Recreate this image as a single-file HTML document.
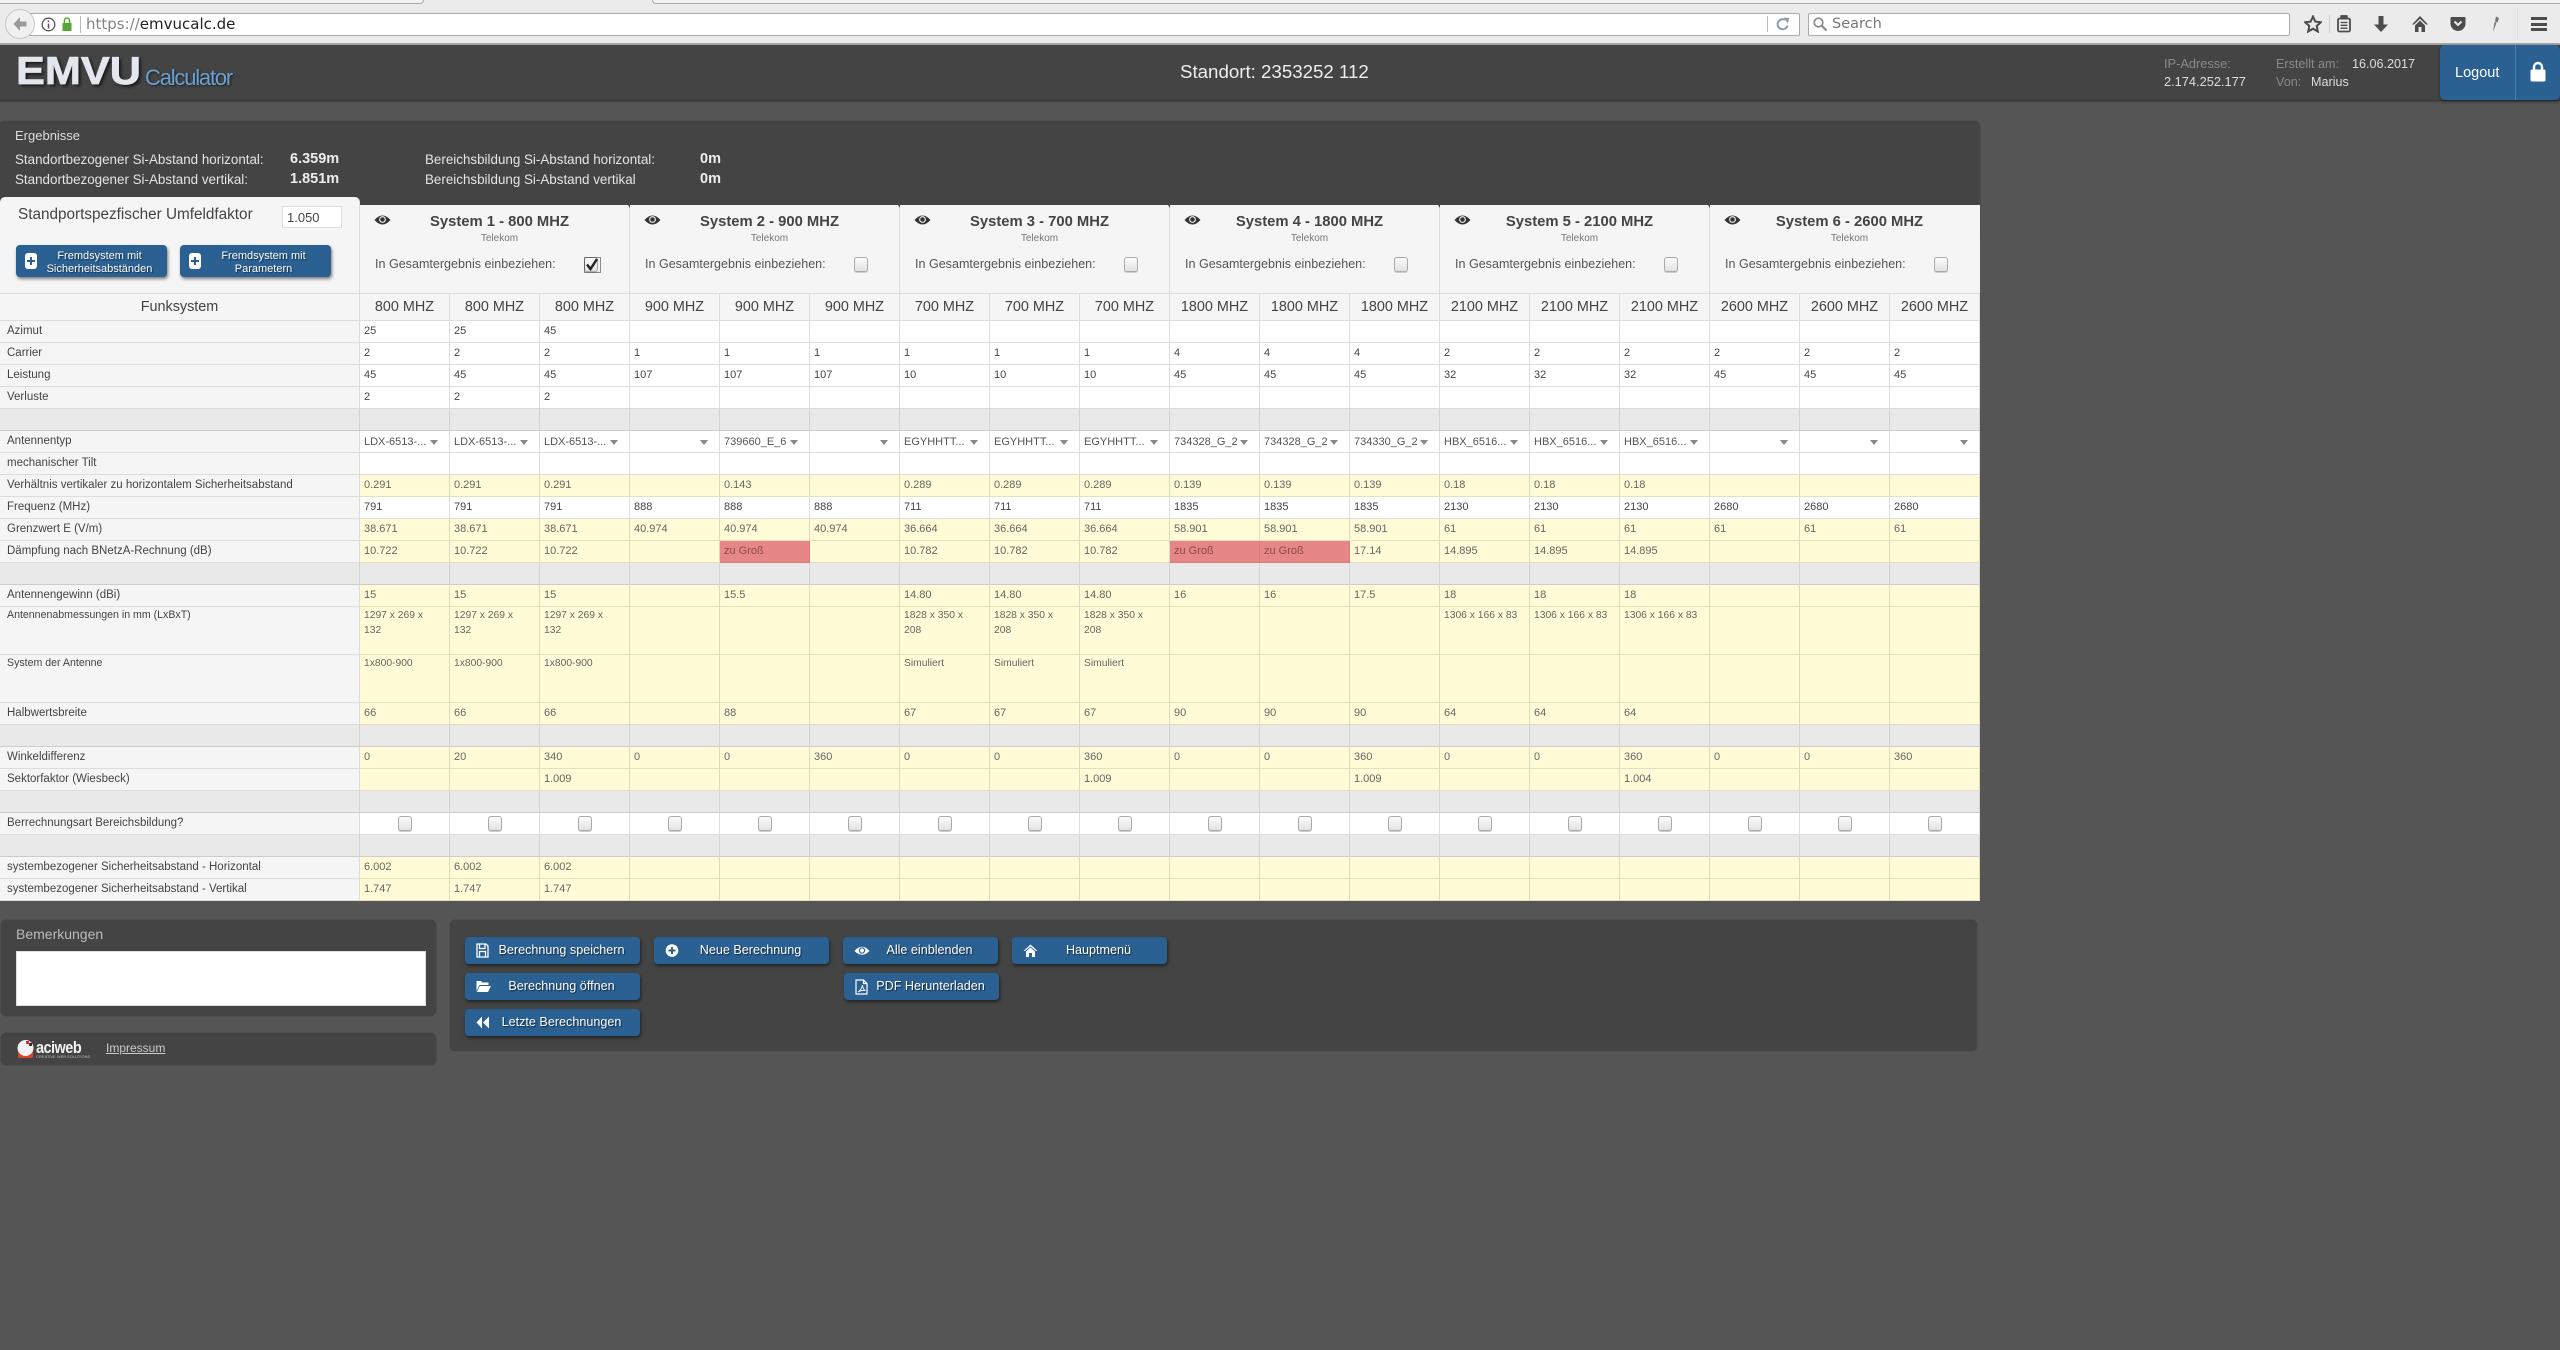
<!DOCTYPE html>
<html lang="de"><head><meta charset="utf-8"><title>EMVU Calculator</title>
<style>
*{box-sizing:border-box}
html,body{margin:0;padding:0;width:2560px;height:1350px;overflow:hidden;background:#555;font-family:"Liberation Sans",Arial,sans-serif;color:#444}
.a{position:absolute}
.t{position:absolute;white-space:nowrap;line-height:1}
#tb{left:0;top:0;width:2560px;height:45px;background:#ebebeb;border-bottom:2px solid #a8a8a8}
.dj{font-family:"DejaVu Sans",sans-serif}
#hd{left:0;top:45px;width:2560px;height:56px;background:#444;border-bottom:1px solid #383838;box-shadow:0 1px 2px rgba(0,0,0,.25)}
.panel{position:absolute;background:#444;border-radius:5px;box-shadow:0 0 1px rgba(0,0,0,.5)}
.btn{position:absolute;height:27px;background:#2a6092;border-radius:4px;box-shadow:1px 2px 3px rgba(0,0,0,.5);color:#fff;font-size:12.6px;line-height:26px;text-align:center;padding-left:18px;text-shadow:1px 1px 1px rgba(0,0,0,.6);white-space:nowrap}
.btn svg{position:absolute;left:11px;top:6px}
.btn2{position:absolute;top:245px;height:32px;width:151px;background:#2a6092;border-radius:4px;box-shadow:1px 2px 3px rgba(0,0,0,.5);color:#fff;font-size:11px;line-height:12.5px;text-align:center;padding:5px 0 0 16px;text-shadow:1px 1px 1px rgba(0,0,0,.5)}
.btn2 i{position:absolute;left:9px;top:8px;width:12px;height:16px;background:#fff;border-radius:3px}
.btn2 i:before{content:"";position:absolute;left:2px;top:7px;width:8px;height:2px;background:#2a6092}
.btn2 i:after{content:"";position:absolute;left:5px;top:4px;width:2px;height:8px;background:#2a6092}
.sys{position:absolute;top:205px;height:88px;width:270px;background:#f5f5f5;border-right:1px solid #ddd}
.sys:after{content:"";position:absolute;right:-3px;top:0;border-left:2.5px solid transparent;border-right:2.5px solid transparent;border-top:3px solid #444}
.sys.l:after{display:none}
.sys .n{position:absolute;left:0;width:279px;top:9px;text-align:center;font-size:14.8px;font-weight:bold;color:#444;line-height:17px;white-space:nowrap}
.sys .k{position:absolute;left:0;width:279px;top:28px;text-align:center;font-size:10px;color:#777;line-height:12px}
.sys .g{position:absolute;left:15px;top:52px;font-size:12.55px;color:#555;line-height:15px;white-space:nowrap}
.sys svg{position:absolute;left:14px;top:9px}
.cb{display:inline-block;width:14px;height:15px;border:1px solid #aaa;border-radius:3px;background:linear-gradient(#fbfbfb,#e2e2e2);box-shadow:0 1px 0 #ccc;vertical-align:middle}
.sys .cb{position:absolute;left:224px;top:52px}
table{position:absolute;left:0;top:293px;width:1980px;border-collapse:separate;border-spacing:0;table-layout:fixed;font-size:11px;color:#444}
td,th{box-sizing:border-box;height:22px;border-right:1px solid #ddd;border-bottom:1px solid #ddd;background:#fff;padding:0 0 0 4px;font-weight:normal;text-align:left;white-space:nowrap;overflow:hidden;line-height:15px}
th{background:#f5f5f5;padding-left:7px;font-size:11.5px;color:#444}
tr.h td,tr.h th{height:27px;background:#f5f5f5;border-top:1px solid #ddd;text-align:center;font-size:14.4px;padding:0;color:#444;line-height:26px}
tr.y td{background:#fffbd6;color:#666;border-color:#e3e0c0;border-right-color:#dedbb9}
tr.e td,tr.e th{background:#e9e9e9;border-bottom-color:#ccc;border-right-color:#d4d4d4}
td.r{background:#e68686!important;color:#8a4b4b!important;border-color:#d77b7b!important}
tr.m td,tr.m th{height:48px;vertical-align:top;padding-top:1px;white-space:normal;font-size:10.3px}
tr.m th{font-size:10.6px;padding-left:7px;padding-right:0;white-space:nowrap}
tr.s td{position:relative;color:#555;padding-top:1px}
tr.s td:after{content:"";position:absolute;left:70px;top:9px;border-left:4px solid transparent;border-right:4px solid transparent;border-top:5px solid #888}
tr.c td{text-align:center;padding:0}
</style></head><body>

<div id="tb" class="a">
 <div class="a" style="left:0;top:0;width:424px;height:4px;border-bottom:1px solid #aaa;border-right:1px solid #aaa;border-bottom-right-radius:6px;background:#f2f2f2"></div>
 <div class="a" style="left:424px;top:3px;width:228px;height:1px;background:#ebebeb"></div>
 <div class="a" style="left:652px;top:0;width:1908px;height:4px;border-bottom:1px solid #aaa;border-left:1px solid #aaa;border-bottom-left-radius:6px;background:#f2f2f2"></div>
 <div class="a" style="left:28px;top:13px;width:1772px;height:23px;background:#fff;border:1px solid #aaa;border-left:0;border-radius:0 2px 2px 0"></div>
 <div class="a" style="left:5px;top:9px;width:30px;height:30px;border-radius:50%;background:#f0f0f0;border:1px solid #c8c8c8"></div>
 <svg class="a" style="left:12px;top:16px" width="16" height="16" viewBox="0 0 16 16"><path d="M8 1 1.500 8 8 15V10.500h6.500V5.500H8z" fill="#9a9a9a"/></svg>
 <svg class="a" style="left:41px;top:17px" width="15" height="15" viewBox="0 0 15 15"><circle cx="7.500" cy="7.500" r="6.300" fill="none" stroke="#555" stroke-width="1.300"/><path d="M7.500 3.500v1.600M7.500 6.500v5" stroke="#555" stroke-width="1.600"/></svg>
 <svg class="a" style="left:61px;top:16px" width="12" height="16" viewBox="0 0 12 16"><path d="M1.500 7V15h9V7z" fill="#57a639"/><path d="M3.500 7V4.500a2.500 2.500 0 0 1 5 0V7" fill="none" stroke="#57a639" stroke-width="1.600"/></svg>
 <div class="a" style="left:80px;top:16px;width:1px;height:17px;background:#bbb"></div>
 <div class="t dj" style="left:86px;top:16px;font-size:15px;line-height:17px;color:#858585">https://<span style="color:#222">emvucalc.de</span></div>
 <div class="a" style="left:1767px;top:16px;width:1px;height:16px;background:#bbb"></div>
 <svg class="a" style="left:1776px;top:17px" width="14" height="14" viewBox="0 0 14 14"><path d="M11.500 8.500A5 5 0 1 1 9 2.800" fill="none" stroke="#8c9bab" stroke-width="2"/><path d="M7.500 0.500 13 1 12 6.500z" fill="#8c9bab"/></svg>
 <div class="a" style="left:1808px;top:13px;width:482px;height:23px;background:#fff;border:1px solid #aaa;border-radius:2px"></div>
 <svg class="a" style="left:1812px;top:16px" width="16" height="16" viewBox="0 0 16 16"><circle cx="6.500" cy="6.500" r="4.300" fill="none" stroke="#888" stroke-width="1.700"/><path d="M10 10 14.500 14.500" stroke="#888" stroke-width="2.200"/></svg>
 <div class="t dj" style="left:1832px;top:16px;font-size:14.500px;line-height:17px;color:#777">Search</div>
 <svg class="a" style="left:2304px;top:15px" width="18" height="18" viewBox="0 0 18 18"><path d="M9 1.500 11.300 6.600 16.800 7.200 12.700 11 13.800 16.500 9 13.700 4.200 16.500 5.300 11 1.200 7.200 6.700 6.600z" fill="none" stroke="#4c4c4c" stroke-width="2"/></svg>
 <div class="a" style="left:2329px;top:15px;width:1px;height:18px;background:#ccc"></div>
 <svg class="a" style="left:2336px;top:15px" width="16" height="18" viewBox="0 0 16 18"><rect x="2" y="3.500" width="12" height="13" rx="1.500" fill="none" stroke="#4c4c4c" stroke-width="1.800"/><path d="M5 0.800h6v3H5zM4.500 7.500h7M4.500 10.300h7M4.500 13.200h7" stroke="#4c4c4c" stroke-width="1.300" fill="#4c4c4c"/></svg>
 <svg class="a" style="left:2373px;top:15px" width="16" height="18" viewBox="0 0 16 18"><path d="M5.500 1h5v8.500H15L8 17 1 9.500h4.500z" fill="#4c4c4c"/></svg>
 <svg class="a" style="left:2411px;top:15px" width="18" height="18" viewBox="0 0 18 18"><path d="M9 1 17 9.500 15 9.500 9 3.800 3 9.500H1z" fill="#4c4c4c"/><path d="M4 10.500 9 5.500 14 10.500V17H10.500V12h-3v5H4z" fill="#4c4c4c"/></svg>
 <svg class="a" style="left:2450px;top:16px" width="16" height="16" viewBox="0 0 16 16"><path d="M1.500 1H14.500Q15.500 1 15.500 2V7.500A7.500 7.500 0 0 1 .5 7.500V2Q.5 1 1.500 1z" fill="#4c4c4c"/><path d="M4.500 5.500 8 9 11.500 5.500" fill="none" stroke="#ebebeb" stroke-width="2"/></svg>
 <svg class="a" style="left:2488px;top:15px" width="14" height="18" viewBox="0 0 14 18"><path d="M8 1.500l3 1.500-1.500 4.500-2.500-1zM6.500 7l2 .8L5 17z" fill="#6b7680"/></svg>
 <div class="a" style="left:2517px;top:8px;width:1px;height:32px;background:#ddd"></div>
 <div class="a" style="left:2531px;top:17px;width:16px;height:3px;background:#4c4c4c"></div>
 <div class="a" style="left:2531px;top:23px;width:16px;height:3px;background:#4c4c4c"></div>
 <div class="a" style="left:2531px;top:28px;width:16px;height:3px;background:#4c4c4c"></div>
</div>

<div id="hd" class="a"></div>
<div class="t" style="left:16px;top:54px;font-size:39px;line-height:36px;font-weight:bold;color:#e2e7ee;-webkit-text-stroke:.7px #e2e7ee;text-shadow:2px 2px 3px rgba(0,0,0,.7);transform:scaleX(1.11);transform-origin:0 0">EMVU</div>
<div class="t" style="left:145px;top:65px;font-size:22px;line-height:25px;color:#6aa0d2;letter-spacing:-1.200px;text-shadow:1px 1px 2px rgba(0,0,0,.6)">Calculator</div>
<div class="t" style="left:1180px;top:62px;font-size:18.700px;line-height:20px;color:#eee">Standort: 2353252 112</div>
<div class="t" style="left:2164px;top:56px;font-size:12.800px;line-height:15px;color:#8a8a8a">IP-Adresse:</div>
<div class="t" style="left:2164px;top:74px;font-size:12.800px;line-height:15px;color:#ddd">2.174.252.177</div>
<div class="t" style="left:2276px;top:57px;font-size:12.600px;line-height:15px;color:#8a8a8a">Erstellt am:</div>
<div class="t" style="left:2352px;top:57px;font-size:12.600px;line-height:15px;color:#ddd">16.06.2017</div>
<div class="t" style="left:2276px;top:75px;font-size:12.600px;line-height:15px;color:#8a8a8a">Von:</div>
<div class="t" style="left:2311px;top:75px;font-size:12.600px;line-height:15px;color:#ddd">Marius</div>
<div class="a" style="left:2440px;top:45px;width:120px;height:55px;background:#2a6092;border-radius:5px;box-shadow:0 1px 3px rgba(0,0,0,.4)"></div>
<div class="a" style="left:2515px;top:45px;width:1px;height:55px;background:#4f80ad"></div>
<div class="t" style="left:2455px;top:65px;font-size:14.500px;line-height:17px;color:#fff">Logout</div>
<svg class="a" style="left:2530px;top:61px" width="16" height="21" viewBox="0 0 16 21"><path d="M4 9V6a4 4 0 0 1 8 0V9" fill="none" stroke="#fff" stroke-width="2.400"/><rect x="0.500" y="8.500" width="15" height="12" rx="1.500" fill="#fff"/></svg>

<div class="panel" style="left:0;top:121px;width:1980px;height:120px"></div>
<div class="t" style="left:15px;top:128px;font-size:13px;line-height:15px;color:#ddd">Ergebnisse</div>
<div class="t" style="left:15px;top:152px;font-size:13.400px;line-height:15px;color:#e4e4e4">Standortbezogener Si-Abstand horizontal:</div>
<div class="t" style="left:15px;top:172px;font-size:13.400px;line-height:15px;color:#e4e4e4">Standortbezogener Si-Abstand vertikal:</div>
<div class="t" style="left:290px;top:151px;font-size:14.500px;line-height:16px;font-weight:bold;color:#eee">6.359m</div>
<div class="t" style="left:290px;top:171px;font-size:14.500px;line-height:16px;font-weight:bold;color:#eee">1.851m</div>
<div class="t" style="left:425px;top:152px;font-size:13.400px;line-height:15px;color:#e4e4e4">Bereichsbildung Si-Abstand horizontal:</div>
<div class="t" style="left:425px;top:172px;font-size:13.400px;line-height:15px;color:#e4e4e4">Bereichsbildung Si-Abstand vertikal</div>
<div class="t" style="left:700px;top:151px;font-size:14.500px;line-height:16px;font-weight:bold;color:#eee">0m</div>
<div class="t" style="left:700px;top:171px;font-size:14.500px;line-height:16px;font-weight:bold;color:#eee">0m</div>

<div class="a" style="left:0;top:197px;width:360px;height:97px;background:#f5f5f5;border-right:1px solid #ddd;border-radius:5px 5px 0 0"></div>
<div class="t" style="left:18px;top:206px;font-size:15.300px;line-height:18px;color:#444">Standportspezfischer Umfeldfaktor</div>
<div class="a" style="left:282px;top:206px;width:60px;height:22px;background:#fff;border:1px solid #ddd;padding-left:4px;font-size:13px;line-height:21px;color:#444">1.050</div>
<div class="btn2" style="left:16px"><i></i>Fremdsystem mit<br>Sicherheitsabständen</div>
<div class="btn2" style="left:180px"><i></i>Fremdsystem mit<br>Parametern</div>

<div class="sys" style="left:360px"><svg width="17" height="12" viewBox="0 0 17 12"><path d="M.5 6Q8.500-3 16.500 6 8.500 15 .5 6z" fill="#333"/><circle cx="8.500" cy="5.500" r="3.400" fill="#f5f5f5"/><circle cx="8.500" cy="5.500" r="2.300" fill="#333"/></svg><div class="n">System 1 - 800 MHZ</div><div class="k">Telekom</div><div class="g">In Gesamtergebnis einbeziehen:</div><span class="cb"></span>
<svg style="left:224px;top:52px" width="17" height="16" viewBox="0 0 17 16"><path d="M3 7.500 6.500 12 13 2" fill="none" stroke="#222" stroke-width="2.400"/><rect x=".5" y=".5" width="16" height="15" fill="none" stroke="#222" stroke-dasharray="1 1"/></svg></div>
<div class="sys" style="left:630px"><svg width="17" height="12" viewBox="0 0 17 12"><path d="M.5 6Q8.500-3 16.500 6 8.500 15 .5 6z" fill="#333"/><circle cx="8.500" cy="5.500" r="3.400" fill="#f5f5f5"/><circle cx="8.500" cy="5.500" r="2.300" fill="#333"/></svg><div class="n">System 2 - 900 MHZ</div><div class="k">Telekom</div><div class="g">In Gesamtergebnis einbeziehen:</div><span class="cb"></span></div>
<div class="sys" style="left:900px"><svg width="17" height="12" viewBox="0 0 17 12"><path d="M.5 6Q8.500-3 16.500 6 8.500 15 .5 6z" fill="#333"/><circle cx="8.500" cy="5.500" r="3.400" fill="#f5f5f5"/><circle cx="8.500" cy="5.500" r="2.300" fill="#333"/></svg><div class="n">System 3 - 700 MHZ</div><div class="k">Telekom</div><div class="g">In Gesamtergebnis einbeziehen:</div><span class="cb"></span></div>
<div class="sys" style="left:1170px"><svg width="17" height="12" viewBox="0 0 17 12"><path d="M.5 6Q8.500-3 16.500 6 8.500 15 .5 6z" fill="#333"/><circle cx="8.500" cy="5.500" r="3.400" fill="#f5f5f5"/><circle cx="8.500" cy="5.500" r="2.300" fill="#333"/></svg><div class="n">System 4 - 1800 MHZ</div><div class="k">Telekom</div><div class="g">In Gesamtergebnis einbeziehen:</div><span class="cb"></span></div>
<div class="sys" style="left:1440px"><svg width="17" height="12" viewBox="0 0 17 12"><path d="M.5 6Q8.500-3 16.500 6 8.500 15 .5 6z" fill="#333"/><circle cx="8.500" cy="5.500" r="3.400" fill="#f5f5f5"/><circle cx="8.500" cy="5.500" r="2.300" fill="#333"/></svg><div class="n">System 5 - 2100 MHZ</div><div class="k">Telekom</div><div class="g">In Gesamtergebnis einbeziehen:</div><span class="cb"></span></div>
<div class="sys l" style="left:1710px;border-right:0"><svg width="17" height="12" viewBox="0 0 17 12"><path d="M.5 6Q8.500-3 16.500 6 8.500 15 .5 6z" fill="#333"/><circle cx="8.500" cy="5.500" r="3.400" fill="#f5f5f5"/><circle cx="8.500" cy="5.500" r="2.300" fill="#333"/></svg><div class="n">System 6 - 2600 MHZ</div><div class="k">Telekom</div><div class="g">In Gesamtergebnis einbeziehen:</div><span class="cb"></span></div>

<table>
<colgroup><col style="width:360px"><col span="18" style="width:90px"></colgroup>
<tbody>
<tr class="h"><th>Funksystem</th><td>800 MHZ</td><td>800 MHZ</td><td>800 MHZ</td><td>900 MHZ</td><td>900 MHZ</td><td>900 MHZ</td><td>700 MHZ</td><td>700 MHZ</td><td>700 MHZ</td><td>1800 MHZ</td><td>1800 MHZ</td><td>1800 MHZ</td><td>2100 MHZ</td><td>2100 MHZ</td><td>2100 MHZ</td><td>2600 MHZ</td><td>2600 MHZ</td><td>2600 MHZ</td></tr>
<tr><th>Azimut</th><td>25</td><td>25</td><td>45</td><td></td><td></td><td></td><td></td><td></td><td></td><td></td><td></td><td></td><td></td><td></td><td></td><td></td><td></td><td></td></tr>
<tr><th>Carrier</th><td>2</td><td>2</td><td>2</td><td>1</td><td>1</td><td>1</td><td>1</td><td>1</td><td>1</td><td>4</td><td>4</td><td>4</td><td>2</td><td>2</td><td>2</td><td>2</td><td>2</td><td>2</td></tr>
<tr><th>Leistung</th><td>45</td><td>45</td><td>45</td><td>107</td><td>107</td><td>107</td><td>10</td><td>10</td><td>10</td><td>45</td><td>45</td><td>45</td><td>32</td><td>32</td><td>32</td><td>45</td><td>45</td><td>45</td></tr>
<tr><th>Verluste</th><td>2</td><td>2</td><td>2</td><td></td><td></td><td></td><td></td><td></td><td></td><td></td><td></td><td></td><td></td><td></td><td></td><td></td><td></td><td></td></tr>
<tr class="e"><th></th><td></td><td></td><td></td><td></td><td></td><td></td><td></td><td></td><td></td><td></td><td></td><td></td><td></td><td></td><td></td><td></td><td></td><td></td></tr>
<tr class="s"><th>Antennentyp</th><td>LDX-6513-...</td><td>LDX-6513-...</td><td>LDX-6513-...</td><td></td><td>739660_E_6</td><td></td><td>EGYHHTT...</td><td>EGYHHTT...</td><td>EGYHHTT...</td><td>734328_G_2</td><td>734328_G_2</td><td>734330_G_2</td><td>HBX_6516...</td><td>HBX_6516...</td><td>HBX_6516...</td><td></td><td></td><td></td></tr>
<tr><th>mechanischer Tilt</th><td></td><td></td><td></td><td></td><td></td><td></td><td></td><td></td><td></td><td></td><td></td><td></td><td></td><td></td><td></td><td></td><td></td><td></td></tr>
<tr class="y"><th>Verhältnis vertikaler zu horizontalem Sicherheitsabstand</th><td>0.291</td><td>0.291</td><td>0.291</td><td></td><td>0.143</td><td></td><td>0.289</td><td>0.289</td><td>0.289</td><td>0.139</td><td>0.139</td><td>0.139</td><td>0.18</td><td>0.18</td><td>0.18</td><td></td><td></td><td></td></tr>
<tr><th>Frequenz (MHz)</th><td>791</td><td>791</td><td>791</td><td>888</td><td>888</td><td>888</td><td>711</td><td>711</td><td>711</td><td>1835</td><td>1835</td><td>1835</td><td>2130</td><td>2130</td><td>2130</td><td>2680</td><td>2680</td><td>2680</td></tr>
<tr class="y"><th>Grenzwert E (V/m)</th><td>38.671</td><td>38.671</td><td>38.671</td><td>40.974</td><td>40.974</td><td>40.974</td><td>36.664</td><td>36.664</td><td>36.664</td><td>58.901</td><td>58.901</td><td>58.901</td><td>61</td><td>61</td><td>61</td><td>61</td><td>61</td><td>61</td></tr>
<tr class="y"><th>Dämpfung nach BNetzA-Rechnung (dB)</th><td>10.722</td><td>10.722</td><td>10.722</td><td></td><td class="r">zu Groß</td><td></td><td>10.782</td><td>10.782</td><td>10.782</td><td class="r">zu Groß</td><td class="r">zu Groß</td><td>17.14</td><td>14.895</td><td>14.895</td><td>14.895</td><td></td><td></td><td></td></tr>
<tr class="e"><th></th><td></td><td></td><td></td><td></td><td></td><td></td><td></td><td></td><td></td><td></td><td></td><td></td><td></td><td></td><td></td><td></td><td></td><td></td></tr>
<tr class="y"><th>Antennengewinn (dBi)</th><td>15</td><td>15</td><td>15</td><td></td><td>15.5</td><td></td><td>14.80</td><td>14.80</td><td>14.80</td><td>16</td><td>16</td><td>17.5</td><td>18</td><td>18</td><td>18</td><td></td><td></td><td></td></tr>
<tr class="y m"><th>Antennenabmessungen in mm (LxBxT)</th><td>1297 x 269 x<br>132</td><td>1297 x 269 x<br>132</td><td>1297 x 269 x<br>132</td><td></td><td></td><td></td><td>1828 x 350 x<br>208</td><td>1828 x 350 x<br>208</td><td>1828 x 350 x<br>208</td><td></td><td></td><td></td><td>1306 x 166 x 83</td><td>1306 x 166 x 83</td><td>1306 x 166 x 83</td><td></td><td></td><td></td></tr>
<tr class="y m"><th>System der Antenne</th><td>1x800-900</td><td>1x800-900</td><td>1x800-900</td><td></td><td></td><td></td><td>Simuliert</td><td>Simuliert</td><td>Simuliert</td><td></td><td></td><td></td><td></td><td></td><td></td><td></td><td></td><td></td></tr>
<tr class="y"><th>Halbwertsbreite</th><td>66</td><td>66</td><td>66</td><td></td><td>88</td><td></td><td>67</td><td>67</td><td>67</td><td>90</td><td>90</td><td>90</td><td>64</td><td>64</td><td>64</td><td></td><td></td><td></td></tr>
<tr class="e"><th></th><td></td><td></td><td></td><td></td><td></td><td></td><td></td><td></td><td></td><td></td><td></td><td></td><td></td><td></td><td></td><td></td><td></td><td></td></tr>
<tr class="y"><th>Winkeldifferenz</th><td>0</td><td>20</td><td>340</td><td>0</td><td>0</td><td>360</td><td>0</td><td>0</td><td>360</td><td>0</td><td>0</td><td>360</td><td>0</td><td>0</td><td>360</td><td>0</td><td>0</td><td>360</td></tr>
<tr class="y"><th>Sektorfaktor (Wiesbeck)</th><td></td><td></td><td>1.009</td><td></td><td></td><td></td><td></td><td></td><td>1.009</td><td></td><td></td><td>1.009</td><td></td><td></td><td>1.004</td><td></td><td></td><td></td></tr>
<tr class="e"><th></th><td></td><td></td><td></td><td></td><td></td><td></td><td></td><td></td><td></td><td></td><td></td><td></td><td></td><td></td><td></td><td></td><td></td><td></td></tr>
<tr class="c"><th>Berrechnungsart Bereichsbildung?</th><td><span class="cb"></span></td><td><span class="cb"></span></td><td><span class="cb"></span></td><td><span class="cb"></span></td><td><span class="cb"></span></td><td><span class="cb"></span></td><td><span class="cb"></span></td><td><span class="cb"></span></td><td><span class="cb"></span></td><td><span class="cb"></span></td><td><span class="cb"></span></td><td><span class="cb"></span></td><td><span class="cb"></span></td><td><span class="cb"></span></td><td><span class="cb"></span></td><td><span class="cb"></span></td><td><span class="cb"></span></td><td><span class="cb"></span></td></tr>
<tr class="e"><th></th><td></td><td></td><td></td><td></td><td></td><td></td><td></td><td></td><td></td><td></td><td></td><td></td><td></td><td></td><td></td><td></td><td></td><td></td></tr>
<tr class="y"><th>systembezogener Sicherheitsabstand - Horizontal</th><td>6.002</td><td>6.002</td><td>6.002</td><td></td><td></td><td></td><td></td><td></td><td></td><td></td><td></td><td></td><td></td><td></td><td></td><td></td><td></td><td></td></tr>
<tr class="y"><th>systembezogener Sicherheitsabstand - Vertikal</th><td>1.747</td><td>1.747</td><td>1.747</td><td></td><td></td><td></td><td></td><td></td><td></td><td></td><td></td><td></td><td></td><td></td><td></td><td></td><td></td><td></td></tr>
</tbody></table>

<div class="panel" style="left:1px;top:920px;width:435px;height:96px"></div>
<div class="t" style="left:16px;top:926px;font-size:14px;line-height:16px;color:#bbb">Bemerkungen</div>
<div class="a" style="left:16px;top:951px;width:410px;height:55px;background:#fff;border:1px solid #ddd"></div>
<div class="panel" style="left:1px;top:1033px;width:435px;height:32px"></div>
<svg class="a" style="left:17px;top:1039px" width="19" height="20" viewBox="0 0 19 20"><rect x="1" y="5" width="15" height="14" rx="1" fill="#d8432b"/><circle cx="8.500" cy="9" r="8" fill="#f2f2f2"/><rect x="9" y="2" width="3" height="3" fill="#c33"/><rect x="12" y="4" width="3" height="3" fill="#333"/></svg>
<div class="t" style="left:36px;top:1040px;font-size:17px;line-height:16px;font-weight:bold;color:#f2f2f2;letter-spacing:-.6px;transform:scaleX(.85);transform-origin:0 0">aciweb</div>
<div class="t" style="left:36px;top:1054px;font-size:4px;line-height:5px;color:#bbb">CREATIVE WEB SOLUTIONS</div>
<div class="t" style="left:106px;top:1041px;font-size:12px;line-height:14px;color:#ccc;text-decoration:underline">Impressum</div>

<div class="panel" style="left:450px;top:920px;width:1527px;height:131px"></div>
<div class="btn" style="left:465px;top:937px;width:175px"><svg width="13" height="15" viewBox="0 0 13 15"><path d="M1 1H10L12 3V14H1zM3.500 1.500V5.500H9V1.500M3.500 13.500V8.500H9.500V13.500" fill="none" stroke="#fff" stroke-width="1.300"/></svg>Berechnung speichern</div>
<div class="btn" style="left:465px;top:973px;width:175px"><svg width="15" height="15" viewBox="0 0 15 15"><path d="M.5 2H5L6.500 3.500H12.500V6H3.500L.5 12z" fill="#fff"/><path d="M3.800 7H15L12 13H.8z" fill="#fff"/></svg>Berechnung öffnen</div>
<div class="btn" style="left:465px;top:1009px;width:175px"><svg width="14" height="15" viewBox="0 0 14 15"><path d="M6 1.500V13.500L.5 7.500zM13 1.500V13.500L7 7.500z" fill="#fff"/></svg>Letzte Berechnungen</div>
<div class="btn" style="left:654px;top:937px;width:175px"><svg width="14" height="15" viewBox="0 0 14 15"><circle cx="7" cy="7.500" r="6.300" fill="#fff"/><path d="M3.500 7.500h7M7 4v7" stroke="#2a6092" stroke-width="2"/></svg>Neue Berechnung</div>
<div class="btn" style="left:843px;top:937px;width:155px"><svg width="16" height="15" viewBox="0 0 17 15"><path d="M.5 8Q8.500-1 16.500 8 8.500 16 .5 8z" fill="#fff"/><circle cx="8.500" cy="7.500" r="3.400" fill="#2a6092"/><circle cx="8.500" cy="7.500" r="2.200" fill="#fff"/></svg>Alle einblenden</div>
<div class="btn" style="left:1012px;top:937px;width:155px"><svg width="15" height="15" viewBox="0 0 15 15"><path d="M7.500 1.500 14.500 8 13 8 7.500 3.500 2 8H.5z" fill="#fff"/><path d="M3 8.500 7.500 4.500 12 8.500V14H9V10H6V14H3z" fill="#fff"/></svg>Hauptmenü</div>
<div class="btn" style="left:844px;top:973px;width:155px"><svg width="13" height="16" viewBox="0 0 13 16"><path d="M1 1H8.500L12 4.500V15H1zM8.500 1V4.500H12" fill="none" stroke="#fff" stroke-width="1.200"/><path d="M3 13Q6.500 11 7.500 6 8 11 10.500 11.500 6 11 3 13z" fill="none" stroke="#fff" stroke-width=".9"/></svg>PDF Herunterladen</div>

</body></html>
